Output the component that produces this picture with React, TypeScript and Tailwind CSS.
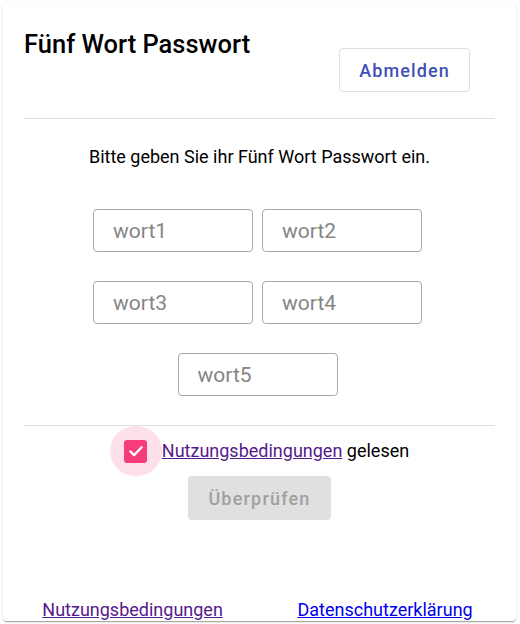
import { useState } from 'react'

const font = { fontFamily: 'Roboto, "Noto Sans", sans-serif' }

function WordInput({ name }: { name: string }) {
  return (
    <input
      placeholder={name}
      className="w-[160px] h-[43px] rounded border border-[#a8a8a8] px-[19px] text-[21px] text-black placeholder:text-[#858585] outline-none"
    />
  )
}

export default function App() {
  const [checked, setChecked] = useState(true)

  return (
    <div className="p-[3px]" style={font}>
      <div className="w-[513px] h-[618px] rounded-[4px] bg-white shadow-[0_2px_1px_-1px_rgba(0,0,0,0.2),0_1px_1px_0_rgba(0,0,0,0.14),0_1px_3px_0_rgba(0,0,0,0.12)] flex flex-col">
        {/* Header */}
        <div className="mx-[21px] h-[116px] flex justify-between border-b border-[#e0e0e0]">
          <h1 className="pt-[25px] text-[25.5px] leading-[32px] font-medium text-black">
            Fünf Wort Passwort
          </h1>
          <button className="mt-[45px] mr-[25px] w-[131px] h-[44px] rounded border border-[#e0e0e0] text-[18px] font-medium tracking-[1.1px] text-[#3f51b5]">
            Abmelden
          </button>
        </div>

        {/* Body */}
        <div className="mx-[21px] flex flex-col items-center border-b border-[#e0e0e0] pb-[29px]">
          <p className="mt-[26px] text-[18px] leading-[24px] text-black">
            Bitte geben Sie ihr Fünf Wort Passwort ein.
          </p>
          <div className="mt-[40px] -ml-[4px] flex flex-col items-center gap-[29px]">
            <div className="flex gap-[9px]">
              <WordInput name="wort1" />
              <WordInput name="wort2" />
            </div>
            <div className="flex gap-[9px]">
              <WordInput name="wort3" />
              <WordInput name="wort4" />
            </div>
            <WordInput name="wort5" />
          </div>
        </div>

        {/* Terms + submit */}
        <div className="flex flex-col items-center">
          <div className="flex items-center h-[50px]">
            <button
              onClick={() => setChecked(!checked)}
              className="w-[52px] h-[50px] rounded-full bg-[#fde0ea] flex items-center justify-center"
            >
              <span className="w-[23px] h-[23px] rounded-[3px] bg-[#f73c7d] flex items-center justify-center">
                {checked && (
                  <svg width="18" height="18" viewBox="0 0 24 24" fill="none">
                    <path d="M4.5 12.5l5 5L19.5 7" stroke="white" strokeWidth="3" strokeLinecap="round" strokeLinejoin="round" />
                  </svg>
                )}
              </span>
            </button>
            <span className="text-[18px] leading-[24px] text-black">
              <a href="#" className="underline text-[#551a8b]">Nutzungsbedingungen</a> gelesen
            </span>
          </div>
          <button
            disabled
            className="w-[143px] h-[44px] rounded bg-[#e0e0e0] text-[18px] font-medium tracking-[1.2px] text-[#a0a0a0]"
          >
            Überprüfen
          </button>
        </div>

        {/* Footer */}
        <div className="mt-auto flex justify-around pl-[2px] pr-[6px] text-[18px] leading-[22px]">
          <a href="#" className="underline text-[#551a8b]">Nutzungsbedingungen</a>
          <a href="#" className="underline text-[#0000ee]">Datenschutzerklärung</a>
        </div>
      </div>
    </div>
  )
}
